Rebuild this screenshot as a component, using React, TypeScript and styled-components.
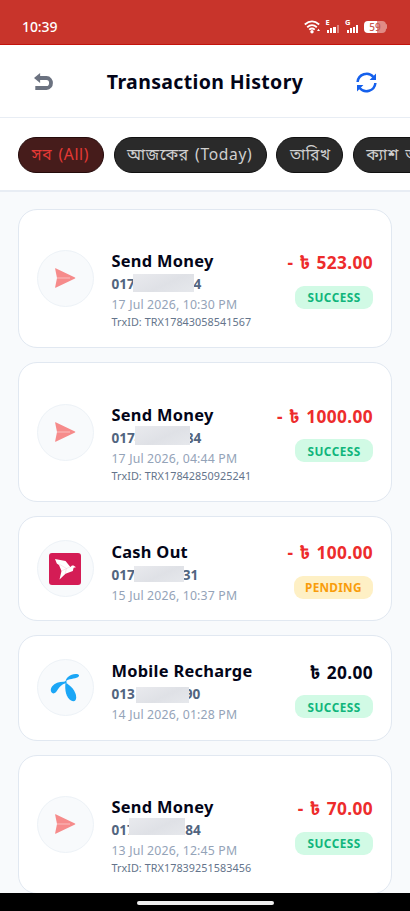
import React from "react";
import styled, { createGlobalStyle } from "styled-components";

const Global = createGlobalStyle`
  * { box-sizing: border-box; }
  html, body { margin: 0; padding: 0; }
  body {
    width: 410px; height: 911px; overflow: hidden; background: #f8fafc;
    font-family: "Noto Sans", "Noto Sans Bengali", "Open Sans", sans-serif;
  }
`;

const Screen = styled.div`
  display: flex; flex-direction: column; width: 410px; height: 911px; overflow: hidden; background: #f8fafc;
`;
const StatusBar = styled.div`
  flex: none; height: 45px; background: #c8342b; border-bottom: 1px solid #c3130c; color: #fff;
  display: flex; align-items: center; justify-content: space-between; padding: 9px 23px 0 22px;
`;
const Clock = styled.span`font-size: 14px; font-weight: 500; line-height: 18px; letter-spacing: -0.1px;`;
const StatusIcons = styled.div`display: flex; align-items: center; svg { display: block; }`;
const Header = styled.header`
  flex: none; height: 73px; background: #fff; border-bottom: 1.5px solid #e8edf4;
  display: flex; align-items: center; justify-content: space-between; padding: 2px 33px 0 33px;
  svg { display: block; }
`;
const Heading = styled.h1`
  margin: 0; font-size: 19.5px; font-weight: 700; line-height: 28px; color: #030518; letter-spacing: 0.35px; white-space: nowrap;
`;
const Filters = styled.div`
  flex: none; height: 74px; background: #fff; border-bottom: 2px solid #e8edf4; overflow: hidden;
  display: flex; align-items: flex-start; gap: 9.3px; padding: 18.6px 0 0 18.4px;
`;
const Chip = styled.button<{ $w: number; $active?: boolean }>`
  flex: none; width: ${p => p.$w}px; height: 36.4px; border-radius: 19px; padding: 0 0 2px 12.4px; text-align: left;
  border: 1px solid ${p => (p.$active ? "#250b0b" : "#101010")};
  background: ${p => (p.$active ? "#461c1b" : "#2a2a2a")}; color: ${p => (p.$active ? "#e53935" : "#d0d0d0")};
  font: 400 15.6px/24px "Noto Sans", "Noto Sans Bengali", sans-serif; letter-spacing: 0.68px; word-spacing: 1.5px; white-space: nowrap;
`;
const List = styled.main`
  flex: 1; min-height: 0; overflow: hidden; display: flex; flex-direction: column; gap: 14px; padding: 16.7px 18.3px 0;
`;
const Card = styled.article<{ $tall: boolean }>`
  flex: none; height: ${p => (p.$tall ? 139.6 : 105.4)}px; background: #fff; border: 1px solid #e1e8f1; border-radius: 19px;
  display: flex; align-items: center; padding: 0 17.6px;
`;
const Avatar = styled.div`
  flex: none; width: 57px; height: 57px; border-radius: 50%; background: #f8fafc; border: 1px solid #edf2f7;
  display: grid; place-items: center;
  svg { display: block; }
`;
const Details = styled.div<{ $tall: boolean }>`
  flex: 1; align-self: flex-start; margin-left: 17.5px; padding-top: ${p => (p.$tall ? 39.7 : 23)}px; white-space: nowrap;
`;
const Title = styled.div`font-size: 16.4px; font-weight: 700; line-height: 23px; color: #030518; letter-spacing: 0.3px;`;
const Phone = styled.div`
  display: flex; height: 23px; align-items: center; font-size: 13.6px; font-weight: 700; color: #526580; line-height: 23px;
`;
const Prefix = styled.span<{ $w: number }>`flex: none; width: ${p => p.$w}px;`;
const Mask = styled.span<{ $w: number; $h: number; $y: number }>`
  flex: none; width: ${p => p.$w}px; height: ${p => p.$h}px; position: relative; z-index: 1; top: ${p => p.$y}px;
  background: linear-gradient(155deg, #e9eaee 0%, #dfe1e6 55%, #e6e8ec 100%);
`;
const Suffix = styled.span<{ $w: number }>`
  flex: none; width: ${p => p.$w}px; display: flex; justify-content: flex-end;
`;
const Time = styled.div`font-size: 12.3px; line-height: 19px; color: #94a3b8; letter-spacing: 0.16px;`;
const Reference = styled.div`font-size: 10.8px; line-height: 16px; color: #64748b; letter-spacing: 0.06px;`;
const Summary = styled.div`flex: none; display: flex; flex-direction: column; align-items: flex-end; gap: 9.5px; padding-top: 2px;`;
const Amount = styled.div<{ $out: boolean }>`
  font-size: 17.3px; font-weight: 700; line-height: 26px; letter-spacing: 0.4px; word-spacing: 1.2px; white-space: nowrap;
  color: ${p => (p.$out ? "#ed2c2c" : "#030518")};
`;
const Badge = styled.span<{ $pending: boolean }>`
  width: ${p => (p.$pending ? 79.4 : 78)}px; height: 22.8px; border-radius: 9px; display: grid; place-items: center;
  font-size: 11.8px; font-weight: 700; letter-spacing: ${p => (p.$pending ? 0.25 : 0.5)}px; line-height: 20px;
  background: ${p => (p.$pending ? "#fef0c5" : "#d1fae5")}; color: ${p => (p.$pending ? "#f99d0b" : "#10b57c")};
`;
const NavBar = styled.div`
  flex: none; height: 18px; background: #000; display: flex; justify-content: center; padding-top: 7.5px;
`;
const Handle = styled.div`width: 137px; height: 4px; border-radius: 2px; background: #eee;`;

const PlaneIcon = () => (
  <svg width="22" height="22" viewBox="0 0 22 22">
    <path d="M1.6 1.2 21 10.6Q21.7 11 21 11.4L1.6 20.8Q.9 21 1.2 20.1L3 11 1.2 1.9Q.9 1 1.6 1.2Z" fill="#f68b8b" />
    <path d="M3 11H16" stroke="#fbc3c3" strokeWidth=".9" />
  </svg>
);
const BirdIcon = () => (
  <svg width="32" height="32" viewBox="0 0 32 32">
    <rect width="32" height="32" rx="3" fill="#d41c55" />
    <path d="M6 6 16.5 8 21.4 14 23 12.5 24.5 12.4 27 14.2 24.6 14.8 23.8 18 16.5 20.8 10.5 26.5 12.5 18 10 12 7.8 10.5Z" fill="#fff" />
    <path d="M10 11 17.5 15.5 21 14M12.5 18 17.5 15.5 16 21" fill="none" stroke="#f3bfd0" strokeWidth=".4" />
  </svg>
);
const PropellerIcon = () => (
  <svg width="30" height="30" viewBox="0 0 30 30" fill="#1ba6f6">
    <path d="M15.6 8.5C16 5 20 1.3 25.5 1.1 29.3 1 30 2.8 27.8 4.3 25 6 18.2 5.6 15.6 8.5Z" />
    <path d="M15.5 9C11 8.4 5 9.8 2.2 13.2-.2 16.4.6 20.2 3.4 20.4 7.4 20.4 8 12.2 15.5 10.2Z" />
    <path d="M15.5 9.8C20.5 12.4 26 18 26.2 24.2 26.2 28 24 29.3 21 27.6 16 24.7 14.6 17 15.5 9.8Z" />
    <circle cx="15.6" cy="9.2" r="1.1" />
  </svg>
);
const BackIcon = () => (
  <svg width="21" height="20" viewBox="0 0 21 20">
    <path d="M6 6H13.5C19.5 6 19.5 16 13.5 16H2.3" fill="none" stroke="#6b7280" strokeWidth="3.8" />
    <path d="M1 6 7.1 1V11Z" fill="#6b7280" />
  </svg>
);
const RefreshIcon = () => (
  <svg width="21" height="21" viewBox="0 0 21 21">
    <path d="M1.6 10A9 9 0 0 1 17.4 5M19.4 11A9 9 0 0 1 3.6 16" fill="none" stroke="#1560ec" strokeWidth="2.5" />
    <path d="M20 1.6V8H13.6ZM1 19.4V13H7.4Z" fill="#1560ec" />
  </svg>
);
const Wifi = () => (
  <svg width="17" height="14" viewBox="0 0 17 14" fill="none" stroke="#fff" strokeWidth="1.8">
    <path d="M.8 4.5Q8 -1.8 15.2 4.5M3.2 7.2Q8 3 12.8 7.2M5.2 9.6Q8 7.4 10.8 9.6" />
    <circle cx="8" cy="11.7" r="1.7" fill="#fff" stroke="none" />
    <path d="M13 11 14.5 8.7 16 11Z" fill="#fff" stroke="none" />
  </svg>
);
const SignalBox = styled.div`
  width: 15px; height: 15px; margin-left: 4.6px; display: flex; flex-direction: column;
  font-size: 7.5px; font-weight: 700; line-height: 6px;
`;
const Bars = styled.div`display: flex; align-items: flex-end; gap: 1.2px; height: 8px; padding-left: 1.5px;`;
const Bar = styled.i<{ $h: number; $dim?: boolean }>`
  width: 2.1px; height: ${p => p.$h}px; background: #fff; opacity: ${p => (p.$dim ? 0.4 : 1)};
`;
const Battery = styled.div`
  width: 22px; height: 12px; margin-left: 4px; border-radius: 4px; display: grid; place-items: center; color: #c8574f;
  background: linear-gradient(90deg, #fff 0 60%, #e08b85 60%); font-size: 10px; font-weight: 500; line-height: 12px;
`;
const BatteryTip = styled.i`width: 1px; height: 5px; background: #e08b85; border-radius: 0 1px 1px 0;`;

const Signal = ({ label, weak }: { label: string; weak?: boolean }) => (
  <SignalBox>
    <span>{label}</span>
    <Bars><Bar $h={3.5} /><Bar $h={4.8} /><Bar $h={6.4} /><Bar $h={8} $dim={weak} /></Bars>
  </SignalBox>
);

type Icon = "plane" | "bird" | "propeller";
interface Transaction {
  icon: Icon; title: string; prefix: string; suffix: string;
  prefixWidth: number; maskWidth: number; maskHeight: number; maskY: number; suffixWidth: number;
  time: string; trx?: string; amount: string; out: boolean; pending?: boolean;
}
const transactions: Transaction[] = [
  { icon: "plane", title: "Send Money", prefix: "017", suffix: "4", prefixWidth: 22, maskWidth: 61, maskHeight: 18, maskY: -1, suffixWidth: 7, time: "17 Jul 2026, 10:30 PM", trx: "TRX17843058541567", amount: "- ৳ 523.00", out: true },
  { icon: "plane", title: "Send Money", prefix: "0174", suffix: "84", prefixWidth: 24, maskWidth: 55, maskHeight: 19, maskY: -2, suffixWidth: 11, time: "17 Jul 2026, 04:44 PM", trx: "TRX17842850925241", amount: "- ৳ 1000.00", out: true },
  { icon: "bird", title: "Cash Out", prefix: "017", suffix: "31", prefixWidth: 23, maskWidth: 50, maskHeight: 16, maskY: 0, suffixWidth: 14, time: "15 Jul 2026, 10:37 PM", amount: "- ৳ 100.00", out: true, pending: true },
  { icon: "propeller", title: "Mobile Recharge", prefix: "013", suffix: "90", prefixWidth: 25, maskWidth: 53, maskHeight: 16, maskY: 1, suffixWidth: 11, time: "14 Jul 2026, 01:28 PM", amount: "৳ 20.00", out: false },
  { icon: "plane", title: "Send Money", prefix: "017", suffix: "84", prefixWidth: 18, maskWidth: 56, maskHeight: 17, maskY: -3, suffixWidth: 15.5, time: "13 Jul 2026, 12:45 PM", trx: "TRX17839251583456", amount: "- ৳ 70.00", out: true },
];
const icons: Record<Icon, React.ReactElement> = { plane: <PlaneIcon />, bird: <BirdIcon />, propeller: <PropellerIcon /> };

const TransactionCard = ({ t }: { t: Transaction }) => (
  <Card $tall={!!t.trx}>
    <Avatar>{icons[t.icon]}</Avatar>
    <Details $tall={!!t.trx}>
      <Title>{t.title}</Title>
      <Phone>
        <Prefix $w={t.prefixWidth}>{t.prefix}</Prefix>
        <Mask $w={t.maskWidth} $h={t.maskHeight} $y={t.maskY} />
        <Suffix $w={t.suffixWidth}><span>{t.suffix}</span></Suffix>
      </Phone>
      <Time>{t.time}</Time>
      {t.trx && <Reference>TrxID: {t.trx}</Reference>}
    </Details>
    <Summary>
      <Amount $out={t.out}>{t.amount}</Amount>
      <Badge $pending={!!t.pending}>{t.pending ? "PENDING" : "SUCCESS"}</Badge>
    </Summary>
  </Card>
);

export default function App() {
  return (
    <Screen>
      <Global />
      <StatusBar>
        <Clock>10:39</Clock>
        <StatusIcons><Wifi /><Signal label="E" weak /><Signal label="G" /><Battery>59</Battery><BatteryTip /></StatusIcons>
      </StatusBar>
      <Header><BackIcon /><Heading>Transaction History</Heading><RefreshIcon /></Header>
      <Filters>
        <Chip $w={86} $active>সব (All)</Chip>
        <Chip $w={153.5}>আজকের (Today)</Chip>
        <Chip $w={67}>তারিখ</Chip>
        <Chip $w={112}>ক্যাশ আউট</Chip>
      </Filters>
      <List>{transactions.map(t => <TransactionCard key={t.time} t={t} />)}</List>
      <NavBar><Handle /></NavBar>
    </Screen>
  );
}
